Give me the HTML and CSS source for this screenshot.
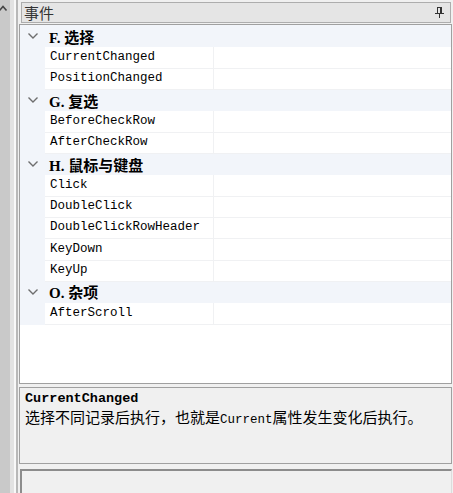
FILE: index.html
```html
<!DOCTYPE html>
<html lang="zh">
  <head>
    <meta charset="UTF-8" />
    <title>事件</title>
    <link rel="stylesheet" href="styles.css">
  </head>
  <body>
    <div class="side">
      <svg class="caret" width="9" height="8" viewBox="0 0 9 8">
        <polyline points="0.5,6.5 4,2.5 7.5,6.5" fill="none" stroke="#444" stroke-width="1.6" />
      </svg>
    </div>
    <div class="splitter"></div>

    <div class="panel">
      <div class="combo">
        <span class="combo-text">事件</span>
        <svg class="pin" width="9" height="12" viewBox="0 0 9 12">
          <rect x="2.5" y="0.5" width="4" height="6" fill="none" stroke="#333" />
          <rect x="5" y="1" width="1" height="5" fill="#333" />
          <rect x="0" y="6" width="9" height="1" fill="#333" />
          <rect x="4" y="7" width="1" height="4" fill="#333" />
        </svg>
      </div>

      <div class="grid">
        <div class="cat first">
          <svg class="chev" width="10" height="6" viewBox="0 0 10 6"><polyline points="0.5,0.5 5,5 9.5,0.5" fill="none" stroke="#6e6e6e" stroke-width="1.4" /></svg>
          <span class="cat-text">F. 选择</span>
        </div>
        <div class="prop"><span class="margin"></span><span class="name">CurrentChanged</span><span class="value"></span></div>
        <div class="prop"><span class="margin"></span><span class="name">PositionChanged</span><span class="value"></span></div>

        <div class="cat">
          <svg class="chev" width="10" height="6" viewBox="0 0 10 6"><polyline points="0.5,0.5 5,5 9.5,0.5" fill="none" stroke="#6e6e6e" stroke-width="1.4" /></svg>
          <span class="cat-text">G. 复选</span>
        </div>
        <div class="prop"><span class="margin"></span><span class="name">BeforeCheckRow</span><span class="value"></span></div>
        <div class="prop"><span class="margin"></span><span class="name">AfterCheckRow</span><span class="value"></span></div>

        <div class="cat">
          <svg class="chev" width="10" height="6" viewBox="0 0 10 6"><polyline points="0.5,0.5 5,5 9.5,0.5" fill="none" stroke="#6e6e6e" stroke-width="1.4" /></svg>
          <span class="cat-text">H. 鼠标与键盘</span>
        </div>
        <div class="prop"><span class="margin"></span><span class="name">Click</span><span class="value"></span></div>
        <div class="prop"><span class="margin"></span><span class="name">DoubleClick</span><span class="value"></span></div>
        <div class="prop"><span class="margin"></span><span class="name">DoubleClickRowHeader</span><span class="value"></span></div>
        <div class="prop"><span class="margin"></span><span class="name">KeyDown</span><span class="value"></span></div>
        <div class="prop"><span class="margin"></span><span class="name">KeyUp</span><span class="value"></span></div>

        <div class="cat">
          <svg class="chev" width="10" height="6" viewBox="0 0 10 6"><polyline points="0.5,0.5 5,5 9.5,0.5" fill="none" stroke="#6e6e6e" stroke-width="1.4" /></svg>
          <span class="cat-text">O. 杂项</span>
        </div>
        <div class="prop"><span class="margin"></span><span class="name">AfterScroll</span><span class="value"></span></div>
      </div>

      <div class="desc">
        <div class="desc-title">CurrentChanged</div>
        <div class="desc-text">选择不同记录后执行，也就是<span class="latin">Current</span>属性发生变化后执行。</div>
      </div>

      <div class="bottom-box"></div>
    </div>
  </body>
</html>
```

FILE: styles.css
```css
body {
  margin: 0;
  height: 493px;
  overflow: hidden;
  display: flex;
  background-color: #f0f0f0;
  font-family: "Liberation Mono", "Noto Sans CJK SC", monospace;
}
.side {
  width: 10px;
  background-color: #c9c9c9;
  overflow: hidden;
}
.caret {
  display: block;
  margin: 4px 0 0 -1px;
}
.splitter {
  width: 4px;
  background-color: #e2e2e2;
  border-right: 2px solid #f8f8f8;
}
.panel {
  flex-grow: 1;
  display: flex;
  flex-direction: column;
  border-left: 2px solid #b8b8b8;
  padding: 2px 1px 0 1px;
}
.combo {
  display: flex;
  align-items: center;
  justify-content: space-between;
  height: 19px;
  margin-left: 2px;
  margin-right: 1px;
  border: 1px solid #adadad;
  background-color: #e5e5e5;
  padding: 0 6px 0 2px;
}
.combo-text {
  font-family: "Noto Sans CJK SC", sans-serif;
  font-size: 15px;
  color: #333;
  line-height: 19px;
}
.pin {
  display: block;
}
.grid {
  margin-top: 1px;
  height: 358px;
  border: 1px solid #a0a0a0;
  background-color: #ffffff;
}
.cat,
.prop {
  display: grid;
  grid-template-columns: 25px 168px 1fr;
  height: 21.3px;
}
.cat {
  background-color: #f2f5fa;
  align-items: center;
}
.cat.first {
  height: 22px;
}
.chev {
  display: block;
  margin: 0 0 0 8px;
}
.cat-text {
  grid-column: 2 / 4;
  padding-left: 4px;
  font-family: "Liberation Serif", "Noto Sans CJK SC", serif;
  font-weight: bold;
  font-size: 15px;
  color: #000;
}
.margin {
  background-color: #f2f5fa;
}
.name {
  padding-left: 5px;
  font-size: 12.5px;
  line-height: 21px;
  color: #000;
  border-bottom: 1px solid #f0f1f3;
}
.value {
  border-left: 1px solid #f0f1f3;
  border-bottom: 1px solid #f0f1f3;
}
.desc {
  margin-top: 3px;
  height: 71px;
  border: 1px solid #a0a0a0;
  background-color: #f0f0f0;
  padding: 2px 5px;
}
.desc-title {
  font-weight: bold;
  font-size: 13.5px;
  line-height: 17px;
}
.desc-text {
  font-family: "Noto Sans CJK SC", sans-serif;
  font-size: 15px;
  line-height: 20px;
  color: #000;
}
.latin {
  font-family: "Liberation Mono", monospace;
  font-size: 12.5px;
}
.bottom-box {
  margin-top: 5px;
  margin-left: 1px;
  flex-grow: 1;
  border-top: 2px solid #8c8c8c;
  border-left: 2px solid #8c8c8c;
  border-right: 1px solid #dcdcdc;
  background-color: #f0f0f0;
}
```
